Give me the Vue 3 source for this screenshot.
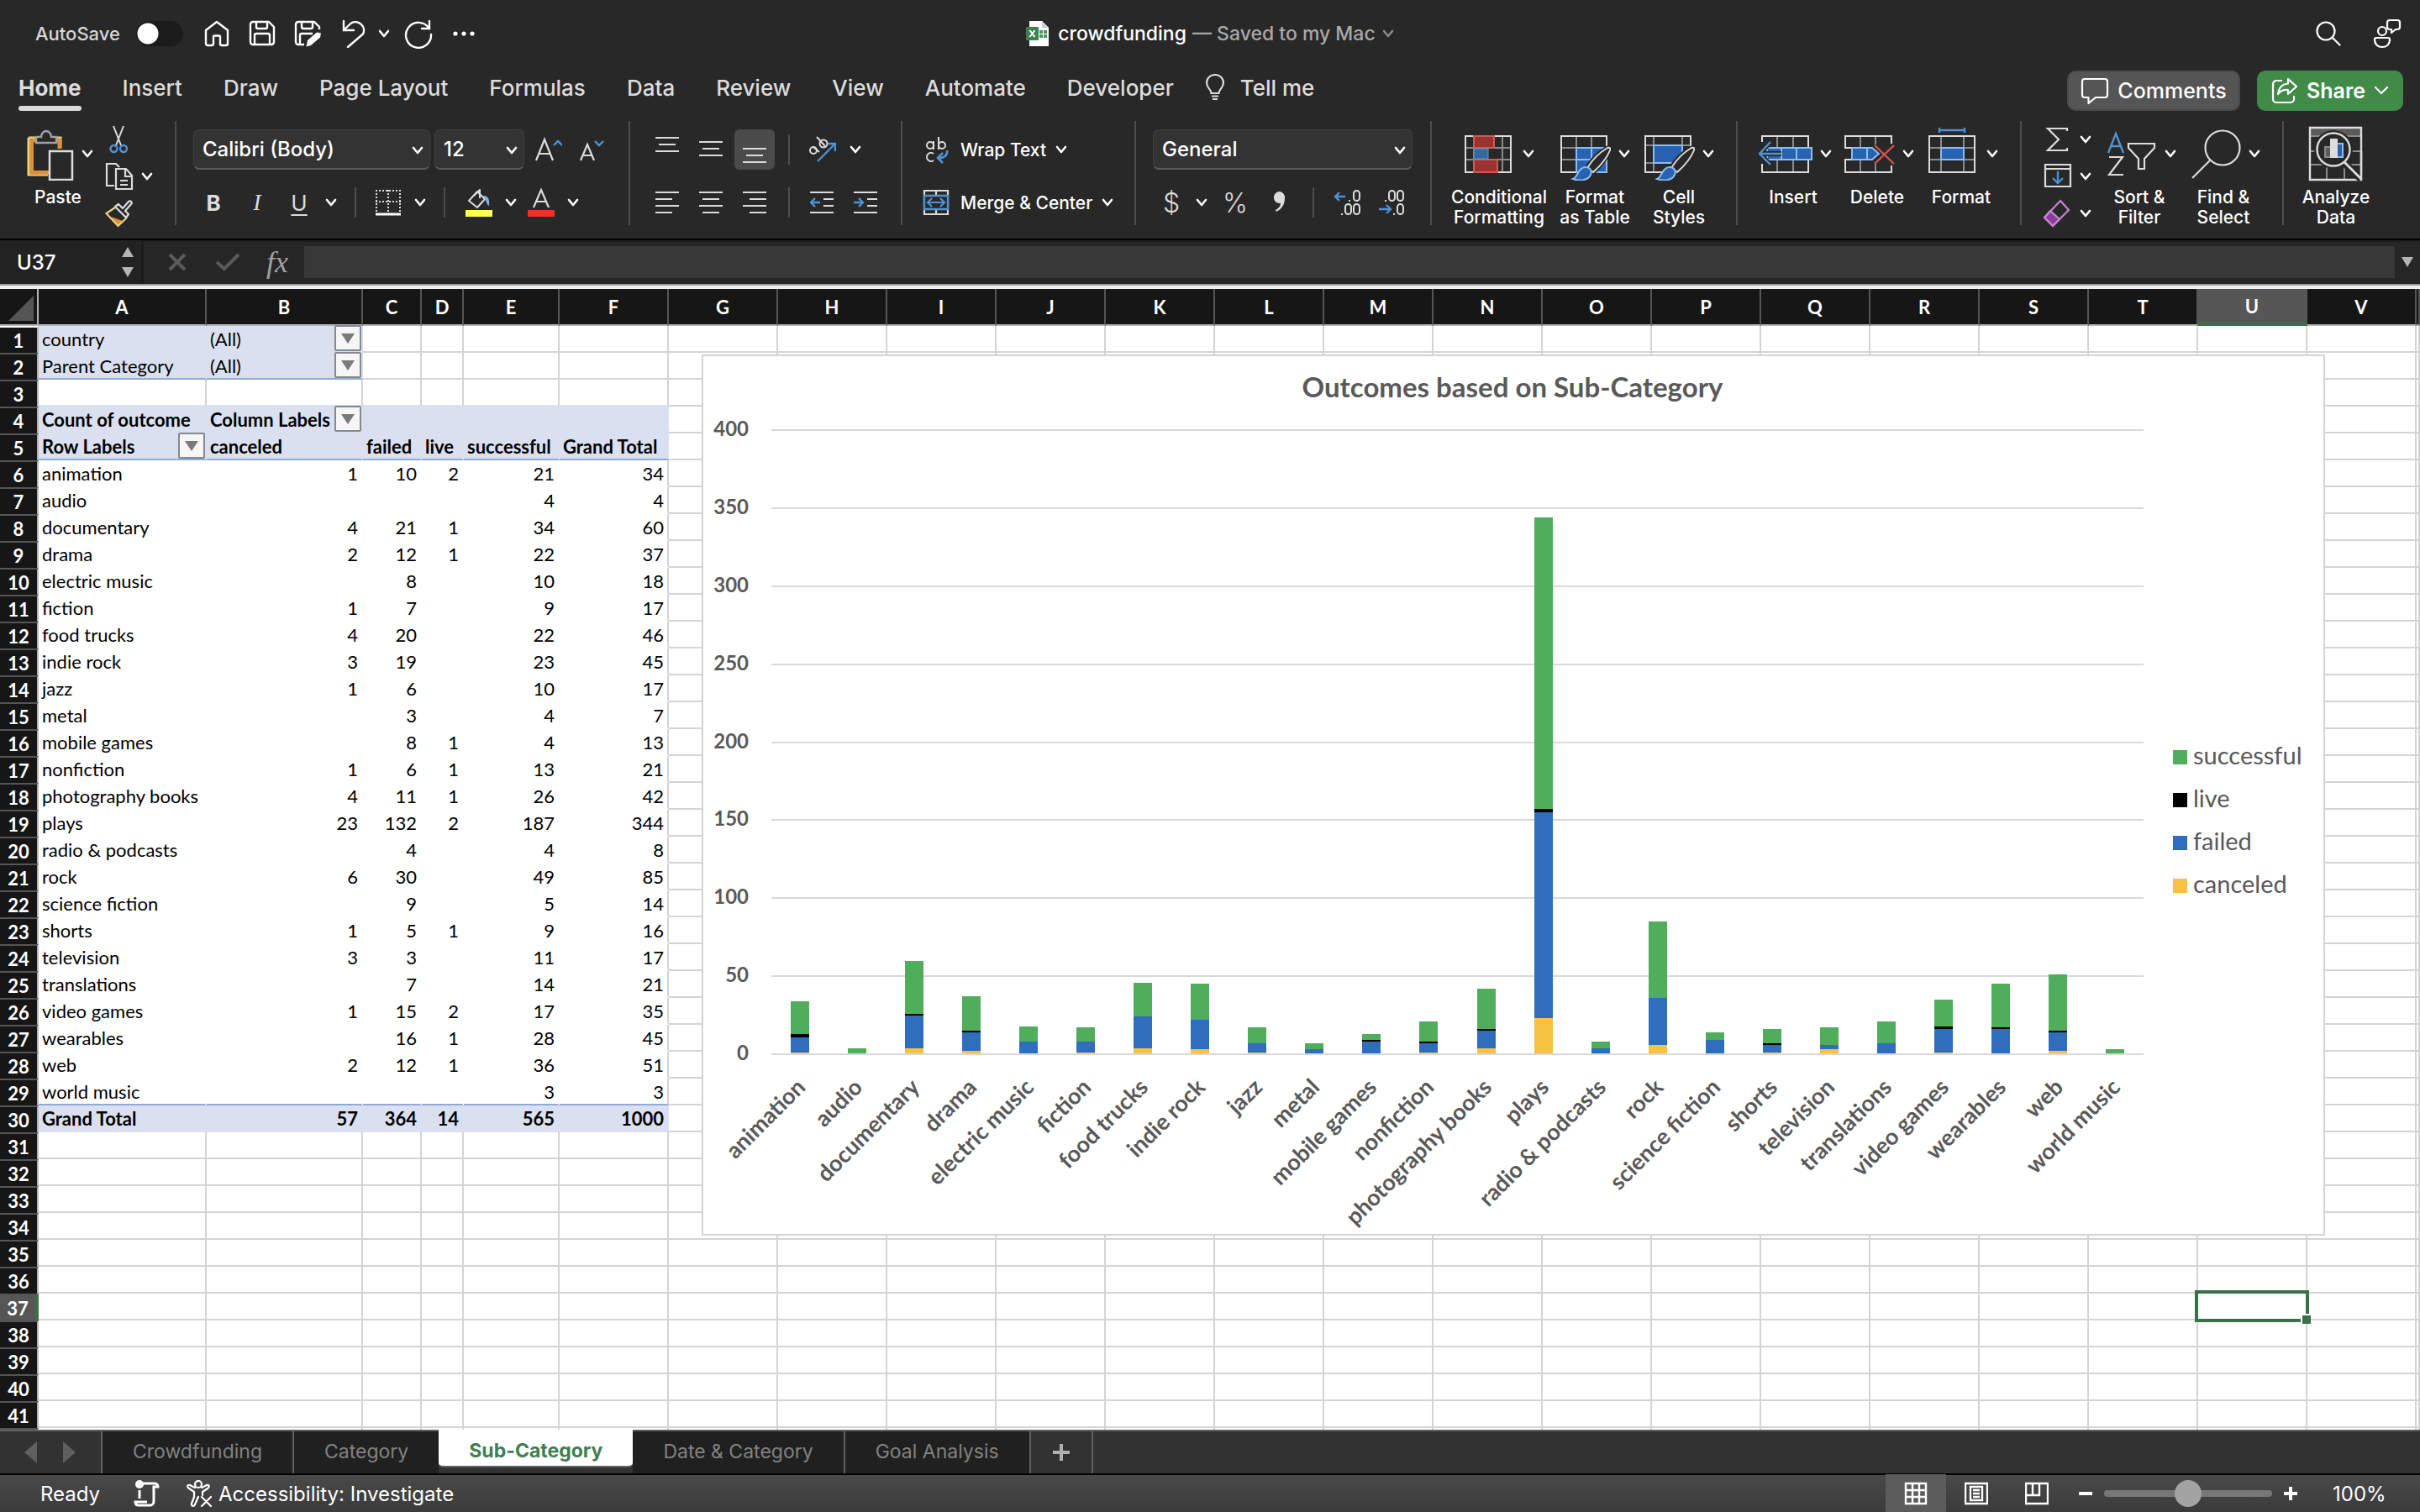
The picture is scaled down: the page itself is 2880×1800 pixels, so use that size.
<script setup>
import { h } from 'vue'

const Chev = () =>
  h('svg', { class: 'chev', width: 14, height: 10, viewBox: '0 0 14 10', fill: 'none', 'aria-hidden': 'true' }, [
    h('path', { d: 'M2 2l5 6 5-6', stroke: 'currentColor', 'stroke-width': 2.6, 'stroke-linecap': 'round', 'stroke-linejoin': 'round' })
  ])

const ribbonTabs = ['Home', 'Insert', 'Draw', 'Page Layout', 'Formulas', 'Data', 'Review', 'View', 'Automate', 'Developer']
const sheets = ['Crowdfunding', 'Category', 'Sub-Category', 'Date & Category', 'Goal Analysis']

const columns = [
  { name: 'A', width: 200 },
  { name: 'B', width: 186 },
  { name: 'C', width: 70 },
  { name: 'D', width: 50 },
  { name: 'E', width: 114 },
  ...'FGHIJKLMNOPQRSTUV'.split('').map((name) => ({ name, width: 130 }))
]

// label, canceled, failed, live, successful
const outcomes = [
  ['animation', 1, 10, 2, 21],
  ['audio', 0, 0, 0, 4],
  ['documentary', 4, 21, 1, 34],
  ['drama', 2, 12, 1, 22],
  ['electric music', 0, 8, 0, 10],
  ['fiction', 1, 7, 0, 9],
  ['food trucks', 4, 20, 0, 22],
  ['indie rock', 3, 19, 0, 23],
  ['jazz', 1, 6, 0, 10],
  ['metal', 0, 3, 0, 4],
  ['mobile games', 0, 8, 1, 4],
  ['nonfiction', 1, 6, 1, 13],
  ['photography books', 4, 11, 1, 26],
  ['plays', 23, 132, 2, 187],
  ['radio & podcasts', 0, 4, 0, 4],
  ['rock', 6, 30, 0, 49],
  ['science fiction', 0, 9, 0, 5],
  ['shorts', 1, 5, 1, 9],
  ['television', 3, 3, 0, 11],
  ['translations', 0, 7, 0, 14],
  ['video games', 1, 15, 2, 17],
  ['wearables', 0, 16, 1, 28],
  ['web', 2, 12, 1, 36],
  ['world music', 0, 0, 0, 3]
]

const cells = {
  1: ['country', '(All)'],
  2: ['Parent Category', '(All)'],
  4: ['Count of outcome', 'Column Labels'],
  5: ['Row Labels', 'canceled', 'failed', 'live', 'successful', 'Grand Total'],
  30: ['Grand Total', 57, 364, 14, 565, 1000]
}
outcomes.forEach(([label, ...n], i) => {
  const total = n.reduce((a, b) => a + b, 0)
  cells[6 + i] = [label, ...n.map((v) => v || ''), total]
})

const filters = ['1-1', '2-1', '4-1', '5-0']
const hasFilter = (r, c) => filters.includes(`${r}-${c}`)

function cellClass(r, c) {
  const k = []
  if (typeof cells[r]?.[c] === 'number') k.push('num')
  if (c < 6) {
    if ((r < 3 && c < 2) || r === 4 || r === 5 || r === 30) k.push('fill')
    if (r === 3) k.push('above-fill')
    if (r >= 6 && r <= 29) k.push('plain')
    if ((r === 2 && c < 2) || r === 5 || r === 29) k.push('rule')
    if (r === 4 || r === 5 || r === 30) k.push('strong')
    if (c === 5) k.push('edge')
  }
  return k
}

const series = [
  { name: 'canceled', color: '#f5c242' },
  { name: 'failed', color: '#2e6ebd' },
  { name: 'live', color: '#000000' },
  { name: 'successful', color: '#50ad5c' }
]
const legend = [...series].reverse()

const plot = { left: 83, right: 1716, zero: 833, top: 90 }
const unit = (plot.zero - plot.top) / 400
const step = (plot.right - plot.left) / outcomes.length
const ticks = [0, 50, 100, 150, 200, 250, 300, 350, 400]
const yOf = (v) => Math.round(plot.zero - v * unit)
const bars = outcomes.map(([label, ...n], i) => {
  let sum = 0
  const parts = n.map((v, s) => {
    const bottom = yOf(sum)
    sum += v
    const top = yOf(sum)
    return { y: top, height: bottom - top, color: series[s].color }
  })
  const mid = Math.round(plot.left + step * (i + 0.5))
  return { label, mid, x: mid - 11, parts: parts.filter((p) => p.height > 0) }
})
</script>

<template>
  <div class="app">
    <header class="titlebar">
      <div class="quick">
        <label class="autosave" for="autosave">AutoSave</label>
        <input id="autosave" class="toggle" type="checkbox" />
        <button class="tool home" aria-label="Home">
          <svg width="32" height="34" viewBox="0 0 32 34" fill="none" stroke="#fff" stroke-width="2.4" stroke-linejoin="round"><path d="M3 13L16 3l13 10v16a2 2 0 0 1-2 2h-5a2 2 0 0 1-2-2v-8a1.500 1.500 0 0 0-1.500-1.500h-5A1.500 1.500 0 0 0 12 21v8a2 2 0 0 1-2 2H5a2 2 0 0 1-2-2z" /></svg>
        </button>
        <button class="tool" aria-label="Save">
          <svg width="32" height="34" viewBox="0 0 32 34" fill="none" stroke="#fff" stroke-width="2.4" stroke-linejoin="round"><path d="M2 6a3 3 0 0 1 3-3h19l6 6v18a3 3 0 0 1-3 3H5a3 3 0 0 1-3-3zM9 3v6a2 2 0 0 0 2 2h9a2 2 0 0 0 2-2V3M7 30V19a2 2 0 0 1 2-2h14a2 2 0 0 1 2 2v11" /></svg>
        </button>
        <button class="tool" aria-label="Save As">
          <svg width="34" height="34" viewBox="0 0 34 34" fill="none" stroke="#fff" stroke-width="2.4" stroke-linejoin="round"><path d="M12 30H5a3 3 0 0 1-3-3V6a3 3 0 0 1 3-3h19l6 6v3M9 3v6a2 2 0 0 0 2 2h9a2 2 0 0 0 2-2V3M7 30V19a2 2 0 0 1 2-2h13" /><path d="M16 25l11-9.500 5 1-1 5L20 31l-5.500 1.500z" fill="#fff" stroke="none" /></svg>
        </button>
        <button class="tool undo" aria-label="Undo">
          <svg width="32" height="34" viewBox="0 0 32 34" fill="none" stroke="#fff" stroke-width="2.4" stroke-linecap="round"><path d="M3 2v11h12M3.500 12.500L12 4.500a10 10 0 0 1 14 13L8 33" /></svg>
          <Chev />
        </button>
        <button class="tool redo" aria-label="Redo">
          <svg width="36" height="36" viewBox="0 0 36 36" fill="none" stroke="#fff" stroke-width="2.4" stroke-linecap="round"><path d="M31 3v9h-9M30.500 11.500A15 15 0 1 0 33 19" /></svg>
        </button>
        <button class="tool more" aria-label="More">
          <svg width="28" height="8" viewBox="0 0 28 8" fill="#fff"><circle cx="4" cy="4" r="2.600" /><circle cx="14" cy="4" r="2.600" /><circle cx="24" cy="4" r="2.600" /></svg>
        </button>
      </div>
      <h1 class="doc">
        <svg width="28" height="32" viewBox="0 0 28 32"><path d="M4 1h15l8 8v22H4z" fill="#fff" /><path d="M19 1l8 8h-8z" fill="#cfcfcf" /><path d="M16 12h4v4h-4zM21 12h4v4h-4zM16 17h4v4h-4zM21 17h4v4h-4z" fill="#4b9560" /><rect x="0" y="8" width="15" height="16" rx="1" fill="#3b8250" /><path d="M4.500 12l6 8M10.500 12l-6 8" stroke="#fff" stroke-width="2" /></svg>
        <span class="doc-name">crowdfunding</span>
        <span class="doc-state">— Saved to my Mac</span>
        <Chev />
      </h1>
      <div class="corner">
        <button class="tool" aria-label="Search">
          <svg width="30" height="30" viewBox="0 0 30 30" fill="none" stroke="#fff" stroke-width="2.2" stroke-linecap="round"><circle cx="12" cy="12" r="10.500" /><path d="M20 20l8.500 8.500" /></svg>
        </button>
        <button class="tool" aria-label="Account">
          <svg width="34" height="36" viewBox="0 0 34 36" fill="none" stroke="#fff" stroke-width="2.2" stroke-linejoin="round"><circle cx="11" cy="15" r="5" /><path d="M2 25a2 2 0 0 1 2-2h14a2 2 0 0 1 2 2c0 6-4 9-9 9S2 31 2 25zM20 2h9a3 3 0 0 1 3 3v5a3 3 0 0 1-3 3h-2l-5 4v-4h-2a3 3 0 0 1-3-3V5a3 3 0 0 1 3-3z" /></svg>
        </button>
      </div>
    </header>

    <nav class="tabs">
      <button v-for="t in ribbonTabs" :key="t" class="tab" :class="{ on: t === 'Home' }">{{ t }}</button>
      <button class="tab tell">
        <svg width="24" height="32" viewBox="0 0 24 32" fill="none" stroke="#dcdcdc" stroke-width="2.200"><path d="M7.500 23c0-5-5.500-6-5.500-12.500A10 9.500 0 0 1 22 10.500C22 17 16.500 18 16.500 23zM8 26.500h8M9 30h6" /></svg>
        <span>Tell me</span>
      </button>
      <span class="grow"></span>
      <button class="pill comments">
        <svg width="34" height="34" viewBox="0 0 34 34" fill="none" stroke="#fff" stroke-width="2.200" stroke-linejoin="round"><path d="M5 3h24a3 3 0 0 1 3 3v16a3 3 0 0 1-3 3H18l-8.500 7v-7H5a3 3 0 0 1-3-3V6a3 3 0 0 1 3-3z" /></svg>
        <span>Comments</span>
      </button>
      <button class="pill share">
        <svg width="32" height="32" viewBox="0 0 32 32" fill="none" stroke="#fff" stroke-width="2.200" stroke-linejoin="round"><path d="M13 4H6a4 4 0 0 0-4 4v18a4 4 0 0 0 4 4h17a4 4 0 0 0 4-4v-4" /><path d="M20 2l10 9-10 9v-5c-5-.5-9 1-12 5 1-8 5-12 12-12.500z" /></svg>
        <span>Share</span>
        <svg width="18" height="12" viewBox="0 0 18 12" fill="none" stroke="#fff" stroke-width="2.200" stroke-linecap="round"><path d="M2 2l7 7 7-7" /></svg>
      </button>
    </nav>

    <section class="ribbon" aria-label="Home">
      <div class="group g-clip">
        <button class="big">
          <span class="big-top">
            <svg width="56" height="64" viewBox="0 0 56 64" fill="none"><path d="M2 13h38v12M2 13v44h23" stroke="#f0d080" stroke-width="3" /><path d="M6 16h33v10M5.500 15v39.500H26" stroke="#d9923b" stroke-width="5" /><path d="M11 19v-7h6c0-4 3-7 6-7s6 3 6 7h6v7z" fill="#282828" stroke="#a0a0a0" stroke-width="2.500" /><rect x="27" y="29" width="27" height="34" fill="#282828" stroke="#dcdcdc" stroke-width="2.500" /></svg>
            <Chev />
          </span>
          <span class="cap">Paste</span>
        </button>
        <div class="stack">
          <button class="mini" aria-label="Cut"><svg width="32" height="34" viewBox="0 0 32 34" fill="none"><path d="M10 1l9 23M22 1l-9 23" stroke="#dcdcdc" stroke-width="2" /><circle cx="10.500" cy="28" r="4" stroke="#4f93d4" stroke-width="2.400" /><circle cx="22" cy="28" r="4" stroke="#4f93d4" stroke-width="2.400" /></svg></button>
          <button class="mini" aria-label="Copy"><svg width="34" height="34" viewBox="0 0 34 34" fill="none" stroke="#dcdcdc" stroke-width="2.200"><path d="M11 28H2V2h11l4 4M13 8h12l7 8v16H13zM24 8v9h8M18 22h9M18 27h9" /></svg><Chev /></button>
          <button class="mini" aria-label="Format Painter"><svg width="34" height="34" viewBox="0 0 34 34" fill="none"><path d="M7 21l14 5-6 6z" fill="#d9923b" /><path d="M12 10L1.500 17l14 15L26 22" stroke="#f0d080" stroke-width="2.200" /><path d="M12 9l4-3 5 5 7-8c2-2 5 1 3 3l-7 8 4 4-3 4z" stroke="#dcdcdc" stroke-width="2.200" stroke-linejoin="round" /></svg></button>
        </div>
      </div>

      <div class="group g-font">
        <div class="line">
          <span class="select w-font"><select aria-label="Font"><option>Calibri (Body)</option></select><Chev /></span>
          <span class="select w-size"><select aria-label="Font size"><option>12</option></select><Chev /></span>
          <button class="sq grow-font" aria-label="Increase font size"><svg width="34" height="34" viewBox="0 0 34 34" fill="none"><path d="M3 30L13 5l10 25M6.500 22h13" stroke="#dcdcdc" stroke-width="2.200" /><path d="M24 12l5-5 5 5" stroke="#4f93d4" stroke-width="2.400" /></svg></button>
          <button class="sq" aria-label="Decrease font size"><svg width="32" height="34" viewBox="0 0 32 34" fill="none"><path d="M3 30l8-19 8 19M6 24h10" stroke="#dcdcdc" stroke-width="2.200" /><path d="M20 7l5 5 5-5" stroke="#4f93d4" stroke-width="2.400" /></svg></button>
        </div>
        <div class="line styles">
          <button class="w52 glyph"><b>B</b></button>
          <button class="w52 glyph"><i>I</i></button>
          <button class="w48 glyph"><u>U</u></button>
          <button class="w28" aria-label="Underline options"><Chev /></button>
          <span class="vbar"></span>
          <button class="w48" aria-label="Borders"><svg width="32" height="32" viewBox="0 0 32 32" fill="none"><path d="M1 2h30M1 15h30" stroke="#dcdcdc" stroke-width="2" stroke-dasharray="2 2" /><path d="M2 1v26M16 1v26M30 1v26" stroke="#dcdcdc" stroke-width="2" stroke-dasharray="2 2" /><path d="M1 30h30" stroke="#fff" stroke-width="3" /></svg></button>
          <button class="w28" aria-label="Border options"><Chev /></button>
          <span class="vbar"></span>
          <button class="w52" aria-label="Fill color"><svg width="34" height="34" viewBox="0 0 34 34" fill="none"><path d="M15 4L5 15l10 8 9-10zM11 9l7-7v10" stroke="#dcdcdc" stroke-width="2" stroke-linejoin="round" /><path d="M22 9c6 0 8 4 7 12-3-1-3-6-5-8z" fill="#7db4e8" /><rect x="1" y="26" width="32" height="8" fill="#ffff54" /></svg></button>
          <button class="w24" aria-label="Fill color options"><Chev /></button>
          <button class="w48" aria-label="Font color"><svg width="34" height="34" viewBox="0 0 34 34" fill="none"><path d="M8 23l9-21 9 21M11 16h12" stroke="#dcdcdc" stroke-width="2.200" /><rect x="1" y="26" width="32" height="8" fill="#eb3323" /></svg></button>
          <button class="w28" aria-label="Font color options"><Chev /></button>
        </div>
      </div>

      <div class="group g-align">
        <div class="line">
          <button class="sq" aria-label="Top align"><svg width="28" height="32" viewBox="0 0 28 32" stroke="#dcdcdc" stroke-width="2"><path d="M0 2h28M4 10h20M0 18h28" /></svg></button>
          <button class="sq" aria-label="Middle align"><svg width="28" height="32" viewBox="0 0 28 32" stroke="#dcdcdc" stroke-width="2"><path d="M0 7h28M4 15h20M0 23h28" /></svg></button>
          <button class="sq on" aria-label="Bottom align"><svg width="28" height="32" viewBox="0 0 28 32" stroke="#dcdcdc" stroke-width="2"><path d="M0 15h28M4 23h20M0 31h28" /></svg></button>
          <span class="vbar"></span>
          <button class="sq" aria-label="Orientation"><svg width="34" height="34" viewBox="0 0 34 34" fill="none" stroke="#dcdcdc" stroke-width="2"><circle cx="7" cy="18" r="4" /><path d="M7 14l7 6" /><circle cx="19" cy="10" r="4.500" /><path d="M11 2l10 11" /><path d="M12 31L32 11M24 10h9v9" stroke="#4f93d4" stroke-width="2.400" /></svg></button>
          <button class="w24" aria-label="Orientation options"><Chev /></button>
        </div>
        <div class="line">
          <button class="sq" aria-label="Align left"><svg width="28" height="30" viewBox="0 0 28 30" stroke="#dcdcdc" stroke-width="2"><path d="M0 3h28M0 11h20M0 19h28M0 27h20" /></svg></button>
          <button class="sq" aria-label="Center"><svg width="28" height="30" viewBox="0 0 28 30" stroke="#dcdcdc" stroke-width="2"><path d="M0 3h28M4 11h20M0 19h28M4 27h20" /></svg></button>
          <button class="sq" aria-label="Align right"><svg width="28" height="30" viewBox="0 0 28 30" stroke="#dcdcdc" stroke-width="2"><path d="M0 3h28M8 11h20M0 19h28M8 27h20" /></svg></button>
          <span class="vbar"></span>
          <button class="sq" aria-label="Decrease indent"><svg width="28" height="30" viewBox="0 0 28 30" fill="none" stroke="#dcdcdc" stroke-width="2"><path d="M0 3h28M16 11h12M16 19h12M0 27h28" /><path d="M12 15H1M6 10l-5 5 5 5" stroke="#4f93d4" stroke-width="2.400" /></svg></button>
          <button class="sq" aria-label="Increase indent"><svg width="28" height="30" viewBox="0 0 28 30" fill="none" stroke="#dcdcdc" stroke-width="2"><path d="M0 3h28M16 11h12M16 19h12M0 27h28" /><path d="M0 15h11M6 10l5 5-5 5" stroke="#4f93d4" stroke-width="2.400" /></svg></button>
        </div>
      </div>

      <div class="group g-wrap">
        <div class="line">
          <button class="wide"><svg width="32" height="34" viewBox="0 0 32 34" fill="none" stroke="#dcdcdc" stroke-width="2"><circle cx="9" cy="12" r="4" /><path d="M13 7v10M19 2v15" /><circle cx="23" cy="12" r="4" /><path d="M13 22a5 5 0 1 0 0 8" /><path d="M29 18c1 6-3 9-10 9M24 21l-6 6 6 6" stroke="#4f93d4" stroke-width="2.600" /></svg><span>Wrap Text</span><Chev /></button>
        </div>
        <div class="line">
          <button class="wide"><svg width="32" height="32" viewBox="0 0 32 32" fill="none"><path d="M2 2h28v28H2zM16 2v6M16 24v6" stroke="#dcdcdc" stroke-width="2.200" /><path d="M2 8h28v16H2z" fill="#282828" stroke="#4f93d4" stroke-width="2.400" /><path d="M7 16h18M11 11l-5 5 5 5M21 11l5 5-5 5" stroke="#4f93d4" stroke-width="2.200" /></svg><span>Merge &amp; Center</span><Chev /></button>
        </div>
      </div>

      <div class="group g-num">
        <div class="line">
          <span class="select w-num"><select aria-label="Number format"><option>General</option></select><Chev /></span>
        </div>
        <div class="line">
          <button class="w44 glyph thin">$</button>
          <button class="w28" aria-label="Currency options"><Chev /></button>
          <button class="w52 glyph thin">%</button>
          <button class="w52" aria-label="Comma style"><svg width="16" height="30" viewBox="0 0 16 30" fill="#dcdcdc"><path d="M8 2a7 7 0 0 1 7 8c0 8-4 13-10 16l-1-2c4-2 6-5 6-8A7 7 0 1 1 8 2z" /></svg></button>
          <span class="vbar"></span>
          <button class="w52" aria-label="Increase decimal"><svg width="34" height="34" viewBox="0 0 34 34" fill="none" stroke="#dcdcdc" stroke-width="2"><path d="M14 10H2M7 5l-5 5 5 5" stroke="#4f93d4" stroke-width="2.400" /><path d="M19 14v2M10 30v2" /><rect x="24" y="3" width="7" height="12" rx="3.500" /><rect x="14" y="19" width="7" height="12" rx="3.500" /><rect x="24" y="19" width="7" height="12" rx="3.500" /></svg></button>
          <button class="w52" aria-label="Decrease decimal"><svg width="34" height="34" viewBox="0 0 34 34" fill="none" stroke="#dcdcdc" stroke-width="2"><path d="M2 25h14M11 20l5 5-5 5" stroke="#4f93d4" stroke-width="2.400" /><path d="M10 14v2M20 30v2" /><rect x="14" y="3" width="7" height="12" rx="3.500" /><rect x="24" y="3" width="7" height="12" rx="3.500" /><rect x="24" y="19" width="7" height="12" rx="3.500" /></svg></button>
        </div>
      </div>

      <div class="group g-style">
        <button class="big first">
          <span class="big-top">
            <svg width="60" height="64" viewBox="0 0 60 64" fill="none"><path d="M1 25h54M1 39h54M11 11v43M45 11v43" stroke="#8a8a8a" stroke-width="2" /><path d="M1 11h54v43H1z" stroke="#dcdcdc" stroke-width="2" /><path d="M11 11h24v14H11zM11 39h28v15H11z" fill="#9b3430" stroke="#cf5a54" stroke-width="2" /><path d="M11 26h17v12H11z" fill="#3568a0" stroke="#5a9bd8" stroke-width="1" /></svg>
            <Chev />
          </span>
          <span class="cap">Conditional<br />Formatting</span>
        </button>
        <button class="big">
          <span class="big-top">
            <svg width="60" height="64" viewBox="0 0 60 64" fill="none"><path d="M1 25h54M1 39h54M19 11v43M37 11v43" stroke="#8a8a8a" stroke-width="2" /><path d="M1 11h54v43H1z" stroke="#dcdcdc" stroke-width="2" /><path d="M19 25h36v29H19z" fill="#2862b0" stroke="#8abdf0" stroke-width="2" /><path d="M37 25v29M19 39h36" stroke="#8abdf0" stroke-width="2" /><path d="M56 25c3-1 4 1 3 3-4 10-12 18-20 27l-9-4c6-10 14-20 26-26z" fill="#282828" stroke="#282828" stroke-width="5" /><path d="M56 25c3-1 4 1 3 3-4 10-11 18-20 26l-7-5c6-10 14-18 24-24z" fill="#282828" stroke="#dcdcdc" stroke-width="2" /><path d="M15 62c6-2 6-14 15-14 5 0 8 4 6 9-3 7-13 8-21 5z" fill="#2862b0" stroke="#8abdf0" stroke-width="2" /></svg>
            <Chev />
          </span>
          <span class="cap">Format<br />as Table</span>
        </button>
        <button class="big">
          <span class="big-top">
            <svg width="60" height="64" viewBox="0 0 60 64" fill="none"><path d="M1 22h54M1 43h54M11 11v43M45 11v43" stroke="#8a8a8a" stroke-width="2" /><path d="M1 11h54v43H1z" stroke="#dcdcdc" stroke-width="2" /><path d="M11 22h34v21H11z" fill="#2862b0" stroke="#8abdf0" stroke-width="2" /><path d="M56 25c3-1 4 1 3 3v28H30v-5c6-10 14-20 26-26z" fill="#282828" stroke="#282828" stroke-width="5" /><path d="M56 25c3-1 4 1 3 3-4 10-11 18-20 26l-7-5c6-10 14-18 24-24z" fill="#282828" stroke="#dcdcdc" stroke-width="2" /><path d="M15 62c6-2 6-14 15-14 5 0 8 4 6 9-3 7-13 8-21 5z" fill="#2862b0" stroke="#8abdf0" stroke-width="2" /></svg>
            <Chev />
          </span>
          <span class="cap">Cell<br />Styles</span>
        </button>
      </div>

      <div class="group g-cells">
        <button class="big">
          <span class="big-top">
            <svg width="64" height="64" viewBox="0 0 64 64" fill="none"><path d="M22 11v43M41 11v43" stroke="#8a8a8a" stroke-width="2" /><path d="M4 18v-7h55v14M4 44v10h55V39" stroke="#dcdcdc" stroke-width="2" /><path d="M10 25h53v14H10z" fill="#2862b0" stroke="#8abdf0" stroke-width="2" /><path d="M27 25v14M45 25v14" stroke="#8abdf0" stroke-width="2" /><path d="M14 18L1 32l13 13M1 32h26" stroke="#282828" stroke-width="6" /><path d="M14 18L1 32l13 13M1 32h26" stroke="#4f93d4" stroke-width="2.400" /></svg>
            <Chev />
          </span>
          <span class="cap">Insert</span>
        </button>
        <button class="big">
          <span class="big-top">
            <svg width="60" height="64" viewBox="0 0 60 64" fill="none"><path d="M19 11v14M37 11v10M19 39v15M37 43v11" stroke="#8a8a8a" stroke-width="2" /><path d="M9 25H1V11h55v9M9 39H1v15h55v-8" stroke="#dcdcdc" stroke-width="2" /><path d="M9 25h24l8 7-8 7H9z" fill="#2862b0" stroke="#8abdf0" stroke-width="2" /><path d="M27 25v14" stroke="#8abdf0" stroke-width="2" /><path d="M36 22l23 22M59 22L36 44" stroke="#d9534f" stroke-width="2.400" /></svg>
            <Chev />
          </span>
          <span class="cap">Delete</span>
        </button>
        <button class="big">
          <span class="big-top">
            <svg width="60" height="64" viewBox="0 0 60 64" fill="none"><path d="M1 25h54M1 39h54M15 11v43M42 11v43" stroke="#8a8a8a" stroke-width="2" /><path d="M1 11h54v43H1z" stroke="#dcdcdc" stroke-width="2" /><path d="M15 25h27v14H15z" fill="#2862b0" stroke="#8abdf0" stroke-width="2" /><path d="M13 4h30M13 1v6M43 1v6" stroke="#4f93d4" stroke-width="2.400" /></svg>
            <Chev />
          </span>
          <span class="cap">Format</span>
        </button>
      </div>

      <div class="group g-edit">
        <div class="stack">
          <button class="mini" aria-label="AutoSum"><svg width="34" height="34" viewBox="0 0 34 34" fill="none" stroke="#dcdcdc" stroke-width="2.200"><path d="M28 7V4H5l13 13L5 30h23v-3" /></svg><Chev /></button>
          <button class="mini" aria-label="Fill"><svg width="34" height="34" viewBox="0 0 34 34" fill="none" stroke="#dcdcdc" stroke-width="2.200"><path d="M2 3h30v26H2zM2 8h30" /><path d="M17 11v14M11 19l6 6 6-6" stroke="#4f93d4" stroke-width="2.400" /></svg><Chev /></button>
          <button class="mini" aria-label="Clear"><svg width="34" height="34" viewBox="0 0 34 34" fill="none" stroke="#c586d0" stroke-width="2.200"><path d="M1 22l7-8 11 10-8 8z" fill="#8a3a9a" /><path d="M20 2l10 11-19 19L1 22z" /></svg><Chev /></button>
        </div>
        <button class="big">
          <span class="big-top">
            <svg width="60" height="64" viewBox="0 0 60 64" fill="none"><path d="M2 31L11 8l9 23M5 23h12" stroke="#4f93d4" stroke-width="2.400" /><path d="M3 36h16L3 57h17" stroke="#dcdcdc" stroke-width="2.200" /><path d="M26 20h31v5L45 38v12h-7V38L26 25z" stroke="#dcdcdc" stroke-width="2.200" /></svg>
            <Chev />
          </span>
          <span class="cap">Sort &amp;<br />Filter</span>
        </button>
        <button class="big">
          <span class="big-top">
            <svg width="60" height="64" viewBox="0 0 60 64" fill="none" stroke="#dcdcdc" stroke-width="2.200"><circle cx="38" cy="25" r="20.500" /><path d="M23.500 39.500L2 61" /></svg>
            <Chev />
          </span>
          <span class="cap">Find &amp;<br />Select</span>
        </button>
      </div>

      <div class="group g-analyze">
        <button class="big">
          <span class="big-top">
            <svg width="66" height="66" viewBox="0 0 66 66" fill="none"><path d="M2 2h61v10H2z" fill="#5a5a5a" /><path d="M2 30h61M2 46h61M22 46v18M43 46v18M2 12h61" stroke="#8a8a8a" stroke-width="2" /><path d="M2 2h61v62H2z" stroke="#dcdcdc" stroke-width="2.400" /><circle cx="30" cy="28" r="23" fill="#282828" /><path d="M43 44l20 19" stroke="#282828" stroke-width="9" /><path d="M63 64V30" stroke="#dcdcdc" stroke-width="2.400" /><circle cx="30" cy="28" r="19.500" stroke="#dcdcdc" stroke-width="2.400" /><path d="M43 43l20 20" stroke="#dcdcdc" stroke-width="3" /><path d="M20 25h8v12h-8z" fill="#5a5a5a" stroke="#8a8a8a" stroke-width="2" /><path d="M34 21h7v16h-7z" fill="#2862b0" stroke="#8abdf0" stroke-width="2" /><path d="M26 15h9v23h-9z" fill="#dcdcdc" /></svg>
          </span>
          <span class="cap">Analyze<br />Data</span>
        </button>
      </div>
    </section>

    <section class="formula">
      <div class="namebox">
        <input aria-label="Name box" value="U37" />
        <svg width="14" height="36" viewBox="0 0 14 36" fill="#b4b4b4"><path d="M7 0l7 12H0zM7 36l7-12H0z" /></svg>
      </div>
      <div class="fx">
        <svg width="22" height="22" viewBox="0 0 22 22" stroke="#5a5a5a" stroke-width="4"><path d="M2 2l18 18M20 2L2 20" /></svg>
        <svg width="30" height="22" viewBox="0 0 30 22" fill="none" stroke="#5a5a5a" stroke-width="4"><path d="M2 11l9 8L28 2" /></svg>
        <i>fx</i>
      </div>
      <input class="fbar" aria-label="Formula" value="" />
      <button class="expand" aria-label="Expand formula bar"><svg width="14" height="12" viewBox="0 0 14 12" fill="#b4b4b4"><path d="M0 0h14L7 12z" /></svg></button>
    </section>

    <main class="sheet">
      <table class="grid">
        <colgroup>
          <col style="width: 46px" />
          <col v-for="c in columns" :key="c.name" :style="{ width: c.width + 'px' }" />
          <col />
        </colgroup>
        <thead>
          <tr>
            <th class="allcells"><svg width="30" height="30" viewBox="0 0 30 30"><path d="M30 0v30H0z" fill="#555" /></svg></th>
            <th v-for="c in columns" :key="c.name" scope="col" :class="{ on: c.name === 'U' }">{{ c.name }}</th>
            <th></th>
          </tr>
        </thead>
        <tbody>
          <tr v-for="r in 41" :key="r">
            <th scope="row" :class="{ on: r === 37 }">{{ r }}</th>
            <td v-for="(c, i) in columns" :key="c.name" :class="cellClass(r, i)">
              {{ cells[r]?.[i] }}
              <button v-if="hasFilter(r, i)" class="filter" aria-label="Filter"><svg width="16" height="12" viewBox="0 0 16 12" fill="#7a7a7a"><path d="M0 0h16L8 12z" /></svg></button>
              <span v-if="r === 37 && c.name === 'U'" class="cursor"></span>
            </td>
            <td></td>
          </tr>
          <tr class="last"><th></th><td v-for="c in columns" :key="c.name"></td><td></td></tr>
        </tbody>
      </table>

      <figure class="chart">
        <svg width="1928" height="1045" viewBox="2 2 1928 1045" role="img" aria-label="Outcomes based on Sub-Category">
          <text class="c-title" x="965" y="51" text-anchor="middle">Outcomes based on Sub-Category</text>
          <g v-for="t in ticks" :key="t">
            <rect :x="plot.left" :y="yOf(t) - 1" :width="plot.right - plot.left" height="2" fill="#d9d9d9" />
            <text class="c-axis" x="56" :y="yOf(t) + 7" text-anchor="end">{{ t }}</text>
          </g>
          <g v-for="b in bars" :key="b.label">
            <rect v-for="p in b.parts" :key="p.color" :x="b.x" :y="p.y" width="22" :height="p.height" :fill="p.color" />
            <text class="c-label" text-anchor="end" :transform="`translate(${b.mid + 8} ${874}) rotate(-45)`">{{ b.label }}</text>
          </g>
          <rect :x="plot.left" :y="plot.zero - 1" :width="plot.right - plot.left" height="2" fill="#d9d9d9" />
          <g v-for="(s, i) in legend" :key="s.name">
            <rect x="1751" :y="471 + i * 51" width="17" height="17" :fill="s.color" />
            <text class="c-legend" x="1775" :y="488 + i * 51">{{ s.name }}</text>
          </g>
        </svg>
      </figure>
    </main>

    <nav class="sheetbar">
      <div class="arrows">
        <svg width="16" height="26" viewBox="0 0 16 26" fill="#5f5f5f"><path d="M15 0v26L0 13z" /></svg>
        <svg width="16" height="26" viewBox="0 0 16 26" fill="#5f5f5f"><path d="M1 0v26l15-13z" /></svg>
      </div>
      <button v-for="s in sheets" :key="s" class="stab" :class="{ on: s === 'Sub-Category' }">{{ s }}</button>
      <button class="add" aria-label="New sheet"><svg width="20" height="20" viewBox="0 0 20 20" stroke="#b0b0b0" stroke-width="4"><path d="M10 0v20M0 10h20" /></svg></button>
    </nav>

    <footer class="status">
      <span class="ready">Ready</span>
      <svg class="macro" width="32" height="32" viewBox="0 0 32 32" fill="none"><circle cx="8" cy="5" r="5" fill="#fff" /><path d="M12 4h14a4 4 0 0 1 4 4h-5v17c0 3-2 5-4 5H7c-3 0-4-2-4-4h14M8 12v10" stroke="#fff" stroke-width="3" /></svg>
      <button class="access">
        <svg width="32" height="32" viewBox="0 0 32 32" fill="none" stroke="#fff" stroke-width="2.200" stroke-linejoin="round" stroke-linecap="round"><circle cx="14" cy="5" r="4" /><path d="M10 9L4 6C1 5 0 8 3 10l6 4v6L6 28c-1 3 3 4 4 1l4-9M18 9l6-3c3-1 4 2 1 4l-6 4v4M18 20l11 11M29 20L18 31" /></svg>
        <span>Accessibility: Investigate</span>
      </button>
      <span class="grow"></span>
      <button class="view on" aria-label="Normal view"><svg width="28" height="28" viewBox="0 0 28 28" fill="none" stroke="#fff" stroke-width="2.400"><path d="M2 2h24v24H2zM10 2v24M18 2v24M2 10h24M2 18h24" /></svg></button>
      <button class="view" aria-label="Page layout view"><svg width="28" height="28" viewBox="0 0 28 28" fill="none" stroke="#fff" stroke-width="2.400"><path d="M1 2h26v24H1zM7 6h14v16H7zM10 10h8M10 14h8M10 18h8" /></svg></button>
      <button class="view" aria-label="Page break view"><svg width="28" height="28" viewBox="0 0 28 28" fill="none" stroke="#fff" stroke-width="2.400"><path d="M1 2h26v24H1zM1 16h16V2M9 2v14" /></svg></button>
      <button class="zoom-btn" aria-label="Zoom out"><svg width="16" height="16" viewBox="0 0 16 16" stroke="#fff" stroke-width="4"><path d="M0 8h16" /></svg></button>
      <input class="zoom" type="range" min="0" max="100" value="50" aria-label="Zoom" />
      <button class="zoom-btn" aria-label="Zoom in"><svg width="16" height="16" viewBox="0 0 16 16" stroke="#fff" stroke-width="4"><path d="M0 8h16M8 0v16" /></svg></button>
      <span class="pct">100%</span>
    </footer>
  </div>
</template>

<style>
body {
  margin: 0;
  background: #282828;
}
</style>

<style scoped>
.app {
  display: flex;
  flex-direction: column;
  min-height: 100vh;
  overflow: hidden;
  background: #282828;
  color: #fff;
  font-family: Inter, "Liberation Sans", sans-serif;
  font-size: 22px;
}
button {
  display: inline-flex;
  align-items: center;
  justify-content: center;
  padding: 0;
  border: 0;
  background: none;
  color: inherit;
  font: inherit;
  white-space: nowrap;
}
svg {
  flex: none;
  display: block;
}
.grow {
  flex: 1;
}

/* title bar */
.titlebar {
  display: grid;
  grid-template-columns: 1fr auto 1fr;
  align-items: center;
  height: 80px;
}
.quick {
  display: flex;
  align-items: center;
  padding-left: 42px;
}
.autosave {
  width: 120px;
  color: #d6d6d6;
  font-weight: 500;
}
.toggle {
  appearance: none;
  width: 56px;
  height: 30px;
  margin: 0 24px 0 0;
  border-radius: 15px;
  background: radial-gradient(circle at 14px 15px, #fff 12px, transparent 13px), #1b1b1b;
}
.tool {
  margin-right: 22px;
}
.undo {
  gap: 12px;
  margin-right: 16px;
}
.redo {
  margin-right: 22px;
}
.doc {
  display: flex;
  align-items: center;
  margin: 0;
  font-size: 23px;
  font-weight: 500;
  white-space: nowrap;
}
.doc-name {
  margin: 0 7px 0 10px;
}
.doc-state {
  margin-right: 8px;
  color: #a8a8a8;
}
.doc .chev {
  color: #8a8a8a;
}
.corner {
  display: flex;
  justify-content: flex-end;
  align-items: center;
  gap: 16px;
}

/* ribbon tabs */
.tabs {
  display: flex;
  align-items: flex-start;
  gap: 49px;
  height: 64px;
  padding: 0 20px 0 22px;
}
.tab {
  height: 52px;
  border-bottom: 4px solid transparent;
  color: #dcdcdc;
  font-size: 26px;
  font-weight: 500;
}
.tab.on {
  position: relative;
  font-weight: 700;
}
.tab.on::after {
  content: "";
  position: absolute;
  left: 0;
  right: 0;
  bottom: -4px;
  height: 6px;
  border-radius: 3px;
  background: #dcdcdc;
}
.tell {
  gap: 18px;
  margin-left: -12px;
}
.pill {
  height: 48px;
  margin-top: 4px;
  border-radius: 10px;
  font-size: 25px;
  font-weight: 500;
}
.comments {
  gap: 10px;
  width: 206px;
  border: 2px solid #4a4a4a;
  background: #555;
}
.share {
  gap: 10px;
  width: 174px;
  margin-left: -29px;
  background: #3f8b47;
  font-weight: 600;
}

/* ribbon */
.ribbon {
  display: flex;
  align-items: flex-start;
  height: 140px;
  border-bottom: 2px solid #000;
}
.group {
  box-sizing: border-box;
  flex: none;
  height: 124px;
  border-right: 2px solid #4d4d4d;
}
.group:last-child {
  border-right: 0;
}
.g-clip,
.g-style,
.g-cells,
.g-edit,
.g-analyze {
  display: flex;
}
.g-clip {
  width: 210px;
  padding-left: 21px;
}
.g-font {
  width: 540px;
  padding: 10px 0 0 20px;
}
.g-align {
  width: 324px;
  padding: 10px 0 0 20px;
}
.g-wrap {
  width: 278px;
  padding: 10px 0 0 24px;
}
.g-num {
  width: 352px;
  padding: 10px 0 0 20px;
}
.g-style {
  padding: 0 18px 0 16px;
}
.g-cells {
  padding: 0 18px;
}
.g-edit {
  padding: 0 18px 0 26px;
}
.g-analyze {
  padding-left: 12px;
}
.line {
  display: flex;
  align-items: center;
  height: 48px;
  margin-bottom: 15px;
}
.styles {
  margin-left: -2px;
}
.big {
  flex-direction: column;
  justify-content: flex-start;
  align-self: flex-start;
  width: 100px;
}
.big.first {
  width: 128px;
}
.big-top {
  display: flex;
  align-items: center;
  justify-content: center;
  gap: 9px;
  height: 78px;
}
.cap {
  font-size: 21px;
  font-weight: 500;
  line-height: 24px;
  text-align: center;
  margin-top: 1px;
}
.g-clip .cap,
.g-cells .cap,
.g-edit .cap {
  padding-right: 4px;
}
.stack {
  display: flex;
  flex-direction: column;
  width: 64px;
  margin-right: 2px;
}
.g-clip .stack {
  margin-left: 4px;
}
.mini {
  flex: none;
  justify-content: flex-start;
  gap: 9px;
  height: 44px;
}
.sq {
  width: 48px;
  height: 48px;
  border-radius: 6px;
}
.g-align .sq {
  margin-right: 4px;
}
.sq.on {
  background: #4b4b4b;
}
.grow-font {
  margin: 0 4px;
}
.w24 {
  width: 24px;
}
.w28 {
  width: 28px;
}
.w44 {
  width: 44px;
}
.w48 {
  width: 48px;
}
.w52 {
  width: 52px;
}
.glyph {
  color: #dcdcdc;
  font-size: 26px;
}
.glyph i {
  font-family: "Liberation Serif", serif;
  font-size: 28px;
}
.glyph u {
  text-underline-offset: 4px;
  text-decoration-thickness: 2px;
}
.thin {
  font-size: 32px;
  font-weight: 300;
}
.vbar {
  width: 2px;
  height: 36px;
  margin: 0 14px;
  background: #4d4d4d;
}
.g-align .vbar {
  margin: 0 14px 0 12px;
}
.select {
  position: relative;
  display: block;
}
.select select {
  box-sizing: border-box;
  appearance: none;
  width: 100%;
  height: 48px;
  padding: 0 10px;
  border: 1px solid #404040;
  border-bottom: 2px solid #5a5a5a;
  border-radius: 7px;
  background: #333;
  color: #fff;
  font: 500 24px Inter, "Liberation Sans", sans-serif;
}
.select .chev {
  position: absolute;
  right: 8px;
  top: 20px;
}
.w-font {
  width: 282px;
  margin-right: 5px;
}
.w-size {
  width: 107px;
}
.w-num {
  width: 309px;
}
.wide {
  font-size: 21px;
  font-weight: 500;
}
.wide span {
  margin: 0 11px 0 13px;
}

/* formula bar */
.formula {
  display: flex;
  align-items: center;
  height: 52px;
  border-bottom: 2px solid #9a9a9a;
  background: #262626;
  box-shadow: inset 0 2px #1f1f1f;
}
.namebox {
  display: flex;
  align-items: center;
  box-sizing: border-box;
  width: 171px;
  height: 52px;
  padding: 0 9px 0 20px;
  border-right: 3px solid #1b1b1b;
  background: #222;
}
.namebox input {
  flex: 1;
  min-width: 0;
  padding: 0;
  border: 0;
  background: none;
  color: #fff;
  font: 500 24px Inter, "Liberation Sans", sans-serif;
}
.fx {
  display: flex;
  align-items: center;
  width: 191px;
  color: #a0a0a0;
}
.fx svg:first-child {
  margin: 0 34px 0 29px;
}
.fx i {
  margin-left: 31px;
  font: italic 36px "Liberation Serif", serif;
}
.fbar {
  flex: 1;
  height: 38px;
  padding: 0 8px;
  border: 0;
  background: #383838;
  color: #fff;
}
.expand {
  width: 30px;
}

/* sheet */
.sheet {
  position: relative;
  flex: 1;
  border-top: 4px solid #f0f0f0;
  background: #fff;
  color: #000;
  font-family: Lato, "Open Sans", sans-serif;
}
.grid {
  width: 100%;
  table-layout: fixed;
  border-spacing: 0;
  font-size: 22px;
}
.grid th {
  box-sizing: border-box;
  padding: 2px 0 0;
  background: #161616;
  color: #fff;
  font-weight: 700;
  line-height: 28px;
}
.grid thead th {
  height: 44px;
  border-right: 2px solid #555;
  border-bottom: 2px solid #b5b5b5;
}
.grid thead th.on {
  border-right-color: #565656;
  border-bottom: 4px solid #3a7148;
  background: #565656;
}
.grid thead .allcells {
  border-right-color: #b5b5b5;
  vertical-align: bottom;
}
.allcells svg {
  margin: 0 0 4px 10px;
}
.grid tbody th {
  height: 32px;
  border-top: 2px solid #555;
  border-right: 2px solid #b5b5b5;
}
.grid tbody tr:first-child th {
  border-top-color: #fff;
}
.grid tbody th.on {
  border-right: 4px solid #3a7148;
  background: #565656;
}
.grid td {
  box-sizing: border-box;
  position: relative;
  height: 32px;
  padding: 2px 4px 0;
  border-right: 2px solid #d4d4d4;
  border-bottom: 2px solid #d4d4d4;
  line-height: 28px;
  white-space: nowrap;
}
.grid .last th,
.grid .last td {
  height: 2px;
  padding: 0;
  border-bottom: 0;
}
.grid td.fill {
  border-color: #dae0f0;
  background: #dae0f0;
}
.grid td.plain {
  border-color: #fff;
}
.grid td.plain.edge {
  border-right-color: #d4d4d4;
}
.grid td.above-fill {
  border-bottom-color: #dae0f0;
}
.grid td.rule {
  border-bottom-color: #8ea9db;
}
.grid td.strong {
  font-weight: 700;
}
.grid td.num {
  text-align: right;
}
.filter {
  box-sizing: border-box;
  position: absolute;
  right: 0;
  top: -1px;
  width: 32px;
  height: 31px;
  border: 2px solid #85888f;
  border-radius: 2px;
  background: #f6f6f6;
}
.cursor {
  position: absolute;
  inset: -4px -4px;
  border: 4px solid #3a7148;
  z-index: 1;
}
.cursor::after {
  content: "";
  position: absolute;
  right: -6px;
  bottom: -6px;
  width: 10px;
  height: 10px;
  border: 2px solid #fff;
  border-width: 2px 0 0 2px;
  background: #3a7148;
}
.chart {
  box-sizing: border-box;
  position: absolute;
  left: 835px;
  top: 78px;
  margin: 0;
  border: 2px solid #d4d4d4;
  background: #fff;
  font-family: Lato, "Open Sans", sans-serif;
}
.chart text {
  fill: #595959;
}
.c-title {
  font-size: 33px;
  font-weight: 700;
}
.c-axis {
  font-size: 24px;
  font-weight: 700;
}
.c-label {
  font-size: 27px;
  font-weight: 700;
}
.c-legend {
  font-size: 29px;
}

/* sheet tabs */
.sheetbar {
  display: flex;
  height: 52px;
  border-top: 2px solid #5f5f5f;
  box-sizing: border-box;
  background: #323232;
}
.arrows {
  display: flex;
  align-items: center;
  gap: 29px;
  width: 91px;
  padding-left: 29px;
}
.stab {
  padding: 0 36px 2px;
  border-left: 2px solid #5f5f5f;
  background: #202020;
  color: #828282;
  font-size: 23px;
}
.stab.on {
  height: 45px;
  margin-top: -2px;
  padding: 6px 36px 0;
  border: 0;
  border-bottom: 2px solid #5f5f5f;
  border-radius: 0 0 5px 5px;
  background: #fff;
  color: #417e52;
  font-weight: 700;
}
.stab.on + .stab {
  border-left: 0;
}
.add {
  width: 76px;
  border: solid #5f5f5f;
  border-width: 0 2px;
}

/* status bar */
.status {
  display: flex;
  align-items: center;
  height: 44px;
  border-top: 2px solid #000;
  background: linear-gradient(#494949, #3b3b3b);
  font-size: 24px;
}
.ready {
  width: 110px;
  padding-left: 48px;
}
.macro {
  margin-right: 32px;
}
.access {
  gap: 6px;
}
.view {
  width: 72px;
  height: 46px;
}
.view.on {
  background: #5c5c5c;
}
.zoom-btn {
  width: 44px;
}
.zoom {
  appearance: none;
  width: 200px;
  height: 8px;
  margin: 0;
  border-radius: 4px;
  background: #777;
}
.zoom::-webkit-slider-thumb {
  appearance: none;
  width: 32px;
  height: 32px;
  border-radius: 50%;
  background: #a3a3a3;
}
.pct {
  box-sizing: border-box;
  width: 132px;
  padding-left: 28px;
}
</style>
